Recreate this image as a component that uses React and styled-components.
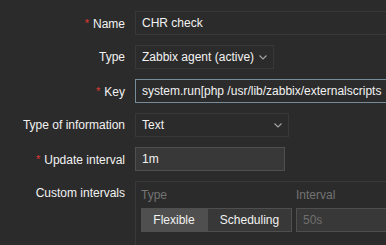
import React from "react";
import styled, { createGlobalStyle } from "styled-components";

const Global = createGlobalStyle`
  html, body { margin: 0; padding: 0; background: #2b2b2b; overflow: hidden; }
  body { font-family: "Liberation Sans", Arial, sans-serif; font-size: 12px; color: #f2f2f2; }
`;

const Form = styled.div`
  display: grid;
  grid-template-columns: 125px auto;
  column-gap: 10px;
  row-gap: 10px;
  padding-top: 11px;
  width: 386px;
  height: 245px;
  overflow: hidden;
  align-content: start;
`;

const Label = styled.div`
  text-align: right;
  line-height: 24px;
  height: 24px;
  white-space: nowrap;
  &::before {
    content: ${(p) => (p.$required ? '"*"' : "none")};
    color: #e33734;
    margin-right: 4px;
    font-size: 11px;
    vertical-align: 1px;
  }
`;

const Field = styled.div`
  display: flex;
  align-items: flex-start;
  min-width: 0;
`;

const Input = styled.div`
  box-sizing: border-box;
  flex: none;
  height: 24px;
  width: ${(p) => p.$w}px;
  padding: 0 6px;
  line-height: 22px;
  white-space: nowrap;
  overflow: hidden;
  background: ${(p) => (p.$editable ? "#383838" : "#2b2b2b")};
  border: 1px solid
    ${(p) => (p.$focus ? "#768d99" : p.$editable ? "#4f4f4f" : "#383838")};
  color: ${(p) => (p.$placeholder ? "#6f6f6f" : "#f2f2f2")};
`;

const Select = styled(Input)`
  position: relative;
  padding-right: 24px;
`;

const Chevron = styled.svg`
  position: absolute;
  right: 6px;
  top: 9px;
`;

const Box = styled.div`
  box-sizing: border-box;
  flex: none;
  width: 460px;
  height: 80px;
  border-top: 1px solid #383838;
  border-left: 1px solid #383838;
  padding: 5px;
  display: grid;
  grid-template-columns: 151px auto;
  grid-auto-rows: min-content;
  align-content: start;
  column-gap: 4px;
  row-gap: 5px;
`;

const ColHead = styled.div`
  color: #737373;
  line-height: 16px;
  height: 16px;
`;

const Segments = styled.div`
  display: flex;
`;

const Segment = styled.div`
  box-sizing: border-box;
  height: 24px;
  line-height: 22px;
  width: ${(p) => p.$w}px;
  text-align: center;
  border: 1px solid #4f4f4f;
  background: ${(p) => (p.$active ? "#4f4f4f" : "#383838")};
  color: #f2f2f2;
`;

function SelectBox({ w, children }) {
  return (
    <Select $w={w}>
      {children}
      <Chevron width="8" height="5" viewBox="0 0 8 5">
        <path d="M0.5 0.5 L4 4 L7.5 0.5" fill="none" stroke="#a5a5a5" strokeWidth="1.1" />
      </Chevron>
    </Select>
  );
}

export default function App() {
  return (
    <>
      <Global />
      <Form>
        <Label $required>Name</Label>
        <Field>
          <Input $w={453}>CHR check</Input>
        </Field>

        <Label>Type</Label>
        <Field>
          <SelectBox w={139}>Zabbix agent (active)</SelectBox>
        </Field>

        <Label $required>Key</Label>
        <Field>
          <Input $w={453} $focus>
            system.run[php /usr/lib/zabbix/externalscripts
          </Input>
        </Field>

        <Label>Type of information</Label>
        <Field>
          <SelectBox w={154}>Text</SelectBox>
        </Field>

        <Label $required>Update interval</Label>
        <Field>
          <Input $w={150} $editable>
            1m
          </Input>
        </Field>

        <Label>Custom intervals</Label>
        <Field>
          <Box>
            <ColHead>Type</ColHead>
            <ColHead>Interval</ColHead>
            <Segments>
              <Segment $active $w={66}>Flexible</Segment>
              <Segment $w={85}>Scheduling</Segment>
            </Segments>
            <Input $w={150} $editable $placeholder>
              50s
            </Input>
          </Box>
        </Field>
      </Form>
    </>
  );
}
